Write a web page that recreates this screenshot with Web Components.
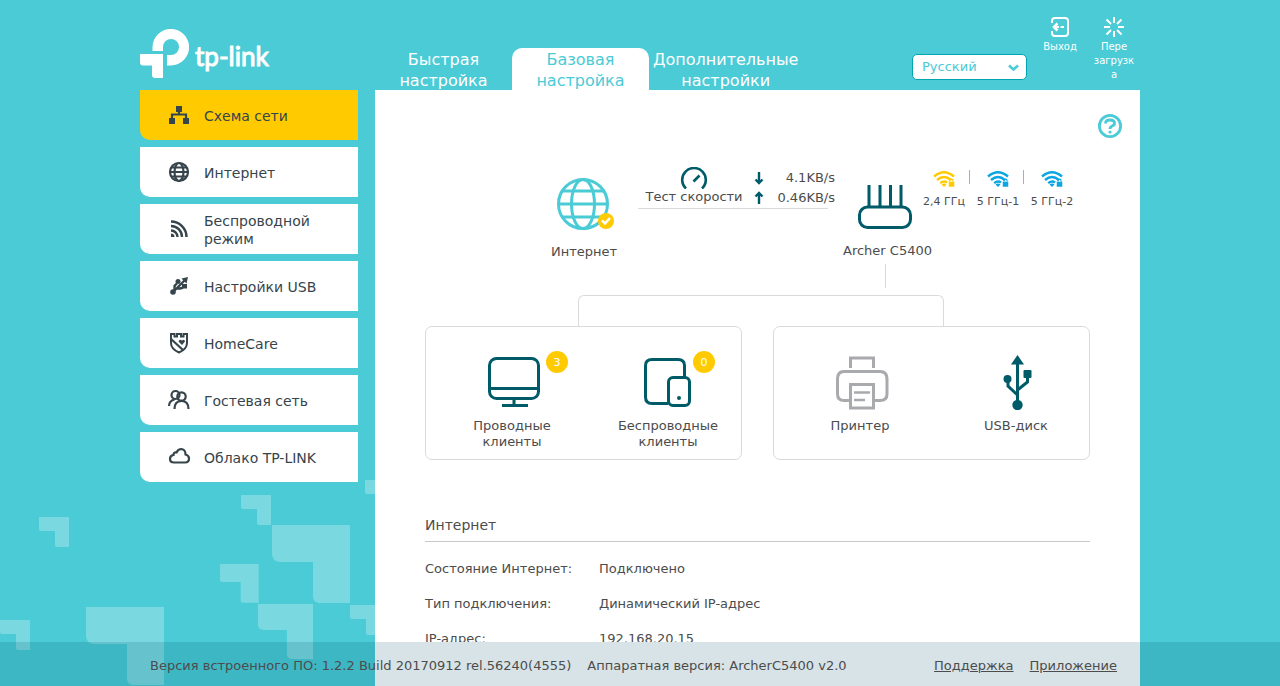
<!DOCTYPE html>
<html lang="ru">
<head>
<meta charset="utf-8">
<title>Archer C5400</title>
<style>
  body {
    margin: 0;
    font-family: "DejaVu Sans", Verdana, sans-serif;
    font-size: 13px;
    line-height: 16px;
    color: #4c4c4c;
    --brand: #4acbd6;
    --deep: #005b69;
    --accent: #ffcb00;
    --ink: #36444b;
    --line: #d9dadb;
  }
</style>
</head>
<body>
<router-app></router-app>

<template id="router-app">
  <style>
    :host { display: flex; flex-direction: column; height: 100vh; position: relative; overflow: hidden; background: var(--brand); }
    .decor { position: absolute; left: 0; bottom: 0; fill: #7ad9e0; }
    .frame { width: 100%; max-width: 1000px; margin: 0 auto; position: relative; }
    .main { flex: 1; min-height: 0; display: flex; gap: 17px; }
    side-nav { flex: 0 0 218px; }
    .panel { flex: 1; min-width: 0; display: flex; flex-direction: column; background: #fff; }
    .scroll { flex: 1; min-height: 0; overflow: hidden; margin-bottom: 44px; padding: 24px 18px 0; }
    .help { display: flex; justify-content: flex-end; }
    .help button { border: 0; padding: 0; background: none; width: 24px; height: 24px; }
    .help svg { display: block; }
    .content { padding: 0 32px; }
    page-footer { position: absolute; left: 0; right: 0; bottom: 0; }
  </style>
  <svg class="decor" width="380" height="206" viewBox="0 480 380 206" aria-hidden="true">
    <defs>
      <path id="step" d="M0 0H78V78H47Q41 77 41 71V37H8Q0 36 0 29Z"/>
      <path id="bit" d="M0 0H30V30H18Q16 30 16 28V14H2Q0 14 0 12Z"/>
    </defs>
    <use href="#bit" x="39" y="517"/>
    <use href="#bit" x="241" y="495"/>
    <use href="#bit" x="365" y="480"/>
    <use href="#bit" x="350" y="605"/>
    <use href="#bit" x="0" y="620"/>
    <use href="#step" x="272" y="525"/>
    <use href="#step" x="86" y="607"/>
    <use href="#step" transform="translate(258 604) scale(.705)"/>
    <use href="#bit" transform="translate(220 564) scale(1.29)"/>
  </svg>
  <page-header class="frame"></page-header>
  <div class="frame main">
    <side-nav>
      <nav-item icon="map" active>Схема сети</nav-item>
      <nav-item icon="globe">Интернет</nav-item>
      <nav-item icon="wifi">Беспроводной режим</nav-item>
      <nav-item icon="usb">Настройки USB</nav-item>
      <nav-item icon="shield">HomeCare</nav-item>
      <nav-item icon="guests">Гостевая сеть</nav-item>
      <nav-item icon="cloud">Облако TP-LINK</nav-item>
    </side-nav>
    <main class="panel">
      <div class="scroll">
        <div class="help"><button type="button" aria-label="Справка">
          <svg width="24" height="24" viewBox="0 0 24 24" fill="none" stroke="#4acbd6" stroke-width="2.800"><circle cx="12" cy="12" r="10.600"/><path d="M7.500 9.600Q7.500 6 12 6Q16.500 6 16.500 9.200Q16.500 11 14.200 12Q12 13 12 15"/><path d="M12 16.800v2.600"/></svg>
        </button></div>
        <div class="content">
          <network-map></network-map>
          <status-list heading="Интернет"></status-list>
        </div>
      </div>
    </main>
  </div>
  <page-footer></page-footer>
</template>

<template id="page-header">
  <style>
    :host { display: flex; height: 90px; color: #fff; }
    .logo { width: 235px; display: flex; align-items: flex-start; gap: 6px; padding-top: 29px; box-sizing: border-box; color: #fff; text-decoration: none; font: 26px/54px Lato, sans-serif; -webkit-text-stroke: 1px #fff; }
    nav { display: flex; align-items: flex-end; }
    nav a { box-sizing: border-box; min-width: 137px; height: 42px; padding: 1px 4px 0; border-radius: 10px 10px 0 0; font-size: 16px; line-height: 21px; text-align: center; color: #fff; text-decoration: none; }
    nav a.on { background: #fff; color: var(--brand); }
    .tools { margin-left: auto; display: flex; align-items: flex-start; gap: 10px; padding-right: 4px; }
    .lang { position: relative; margin-top: 54px; padding-right: 1px; }
    select { appearance: none; display: block; width: 115px; height: 26px; box-sizing: border-box; padding: 0 9px; border: 1px solid #00a4b0; border-radius: 5px; background: #fff; color: var(--brand); font: 13px/24px "DejaVu Sans", sans-serif; }
    .lang svg { position: absolute; right: 9px; top: 10px; pointer-events: none; }
    button { width: 44px; margin-top: 16px; padding: 0; border: 0; background: none; color: #fff; font: 10px/14px "DejaVu Sans", sans-serif; display: flex; flex-direction: column; align-items: center; gap: 2px; text-align: center; }
  </style>
  <a class="logo" href="#">
    <svg width="49" height="49" viewBox="0 0 49 49" fill="#fff"><path d="M12.500 22V18A18.300 18.300 0 1 1 31 36.500H27V26H31A8 8 0 1 0 23 18V22Z"/><path d="M0 25H23V49H15Q12 49 12 46V36.500H3Q0 36.500 0 33.500Z"/></svg>
    <span>tp-link</span>
  </a>
  <nav>
    <a href="#">Быстрая<br>настройка</a>
    <a href="#" class="on">Базовая<br>настройка</a>
    <a href="#">Дополнительные<br>настройки</a>
  </nav>
  <div class="tools">
    <div class="lang">
      <select aria-label="Язык"><option>Русский</option></select>
      <svg width="11" height="8" viewBox="0 0 11 8" fill="none" stroke="#4acbd6" stroke-width="2.600"><path d="M1 1.500L5.500 5.500L10 1.500"/></svg>
    </div>
    <button type="button">
      <svg width="22" height="22" viewBox="0 0 22 22" fill="none" stroke="#fff" stroke-width="2"><path d="M3 7V5Q3 2 6 2H16Q19 2 19 5V17Q19 20 16 20H6Q3 20 3 17V15"/><path d="M4 11H10M11.500 11H15" stroke-width="2"/><path d="M8.500 7.500L5 11L8.500 14.500" stroke-width="2.600"/></svg>
      <span>Выход</span>
    </button>
    <button type="button">
      <svg width="22" height="22" viewBox="0 0 22 22" stroke="#fff" stroke-width="2"><path d="M11 1V7M11 15V21M1 11H7M15 11H21M3.500 3.500L8 8M14 14L18.500 18.500M18.500 3.500L14 8M8 14L3.500 18.500"/></svg>
      <span>Пере<br>загрузк<br>а</span>
    </button>
  </div>
</template>

<template id="side-nav">
  <style>
    :host { display: block; }
    nav { display: flex; flex-direction: column; gap: 7px; }
  </style>
  <nav><slot></slot></nav>
</template>

<template id="nav-item">
  <style>
    :host { display: block; }
    a { display: flex; align-items: center; gap: 13px; height: 50px; padding: 1px 26px 0; box-sizing: border-box; background: #fff; border-radius: 0 0 0 10px; color: var(--ink); text-decoration: none; font-size: 14px; line-height: 18px; }
    :host([active]) a { background: var(--accent); }
    svg { flex: none; padding-bottom: 2px; fill: none; stroke: #36444b; stroke-width: 2.200; }
    .f { fill: #36444b; stroke: none; }
  </style>
  <a href="#"><svg width="25" height="24" viewBox="0 0 25 24"></svg><span><slot></slot></span></a>
</template>

<template id="network-map">
  <style>
    :host { display: block; padding-top: 26px; }
    .top { display: flex; align-items: flex-start; padding-left: 115px; height: 100px; }
    .node { display: flex; flex-direction: column; align-items: center; gap: 13px; white-space: nowrap; }
    .node svg { display: block; }
    .net { width: 88px; padding-top: 13px; }
    .router { width: 60px; padding-top: 20px; margin-left: 27px; padding-right: 1px; }
    .router span { margin: 0 -20px 0 -15px; }
    .speed { display: flex; width: 190px; height: 43px; margin-left: 10px; border-bottom: 1px solid var(--line); white-space: nowrap; }
    .speed button { flex: none; width: 112px; padding: 1px 0 0; border: 0; background: none; font: inherit; color: inherit; display: flex; flex-direction: column; align-items: center; justify-content: flex-start; }
    .speed { padding-top: 1px; }
    .speed button svg { margin-top: 1px; }
    .rates { display: grid; grid-template-columns: 18px 67px; line-height: 20px; padding-top: 3px; height: 40px; text-align: right; align-items: center; }
    .bands { display: flex; padding: 5px 0 0 1px; }
    .band { width: 54px; display: flex; flex-direction: column; align-items: center; gap: 8px; font: 11px/14px "DejaVu Sans", sans-serif; white-space: nowrap; position: relative; }
    .band + .band::before { content: ""; position: absolute; left: -2px; top: 1px; height: 14px; border-left: 1px solid #b0b0a0; }
    .stem { height: 24px; margin: 0 204px 7px 0; border-right: 1px solid var(--line); }
    .fork { height: 30px; margin: 0 146px 0 153px; border: 1px solid var(--line); border-bottom: 0; border-radius: 6px 6px 0 0; }
    .groups { display: grid; grid-template-columns: 1fr 1fr; gap: 31px; }
    .group { height: 134px; box-sizing: border-box; border: 1px solid var(--line); border-radius: 7px; display: flex; gap: 16px; padding: 27px 0 0 16px; }
  </style>
  <div class="top">
    <div class="node net">
      <svg width="60" height="54" viewBox="0 0 60 54" fill="none" stroke="#4acbd6" stroke-width="3"><circle cx="29" cy="27" r="24.500"/><ellipse cx="29" cy="27" rx="11.500" ry="24.500"/><path d="M4 27H54M9 14H49M9 40H49"/><circle cx="52" cy="44" r="8" fill="#ffcb00" stroke="none"/><path d="M48 43.500L51 46.500L56 41" stroke="#fff" stroke-width="2.500"/></svg>
      <span>Интернет</span>
    </div>
    <div class="speed">
      <button type="button">
        <svg width="28" height="22" viewBox="0 0 28 22" fill="none" stroke="#005b69" stroke-width="2.600"><path d="M6 21.500A11.800 11.800 0 1 1 22 21.500"/><path d="M13.500 14.500L19.500 8.500"/></svg>
        <span>Тест скорости</span>
      </button>
      <div class="rates">
        <svg width="18" height="14" viewBox="0 0 18 14" fill="none" stroke="#005b69" stroke-width="2.400"><path d="M9 1V12M5.500 8.500L9 12L12.500 8.500"/></svg><span>4.1KB/s</span>
        <svg width="18" height="14" viewBox="0 0 18 14" fill="none" stroke="#005b69" stroke-width="2.400"><path d="M9 13V2M5.500 5.500L9 2L12.500 5.500"/></svg><span>0.46KB/s</span>
      </div>
    </div>
    <div class="node router">
      <svg width="54" height="46" viewBox="0 0 54 46" fill="none" stroke="#005b69" stroke-width="3"><rect x="1.500" y="23" width="51" height="20.500" rx="8"/><path d="M11 1V23M22 1V23M32.500 1V23M43 1V23"/></svg>
      <span>Archer C5400</span>
    </div>
    <div class="bands">
      <band-icon class="band" color="#ffcb00">2,4 ГГц</band-icon>
      <band-icon class="band" color="#0aa5e2">5 ГГц-1</band-icon>
      <band-icon class="band" color="#0aa5e2">5 ГГц-2</band-icon>
    </div>
  </div>
  <div class="stem"></div>
  <div class="fork"></div>
  <div class="groups">
    <div class="group">
      <client-tile icon="monitor" count="3">Проводные клиенты</client-tile>
      <client-tile icon="tablet" count="0">Беспроводные клиенты</client-tile>
    </div>
    <div class="group">
      <client-tile icon="printer">Принтер</client-tile>
      <client-tile icon="usb">USB-диск</client-tile>
    </div>
  </div>
</template>

<template id="band-icon">
  <style>
    :host { display: flex; }
    svg { display: block; }
  </style>
  <svg width="22" height="18" viewBox="0 0 22 18" fill="none" stroke="currentColor" stroke-width="2.400"><path d="M1 7.500Q11 -1 21 7.500M4 11Q11 5 18 11M7.200 14.200Q11 11 14 13.500"/><path d="M8.500 15.500Q11 13.500 13.500 15.500L11 18Z" fill="currentColor" stroke="none"/><path d="M15.500 12.500H21.500V18H15.500Z" fill="currentColor" stroke="#fff" stroke-width=".5"/><path d="M17 12.500V11.500Q17 10.200 18.500 10.200T20 11.500V12.500" stroke-width="1.200"/></svg>
  <span><slot></slot></span>
</template>

<template id="client-tile">
  <style>
    :host { display: block; width: 140px; flex: none; position: relative; text-align: center; }
    svg { display: block; margin: 0 auto 8px; fill: none; stroke: #005b69; stroke-width: 3; }
    .label { display: block; width: 110px; margin: 0 auto; }
    .count { position: absolute; top: -3px; width: 22px; height: 22px; border-radius: 50%; background: var(--accent); color: #fff; font: 11px/23px "DejaVu Sans", sans-serif; }
    :host([icon="monitor"]) .count { left: 104px; }
    :host([icon="tablet"]) .count { left: 95px; }
  </style>
  <svg width="60" height="56" viewBox="0 0 60 56"></svg>
  <span class="label"><slot></slot></span>
</template>

<template id="status-list">
  <style>
    :host { display: block; padding-top: 56px; }
    h2 { margin: 0; padding-bottom: 7px; border-bottom: 1px solid #c8c8c8; font-size: 14px; line-height: 18px; font-weight: normal; }
    dl { margin: 9px 0 0; display: grid; grid-template-columns: 174px 1fr; line-height: 35px; }
    dd { margin: 0; }
  </style>
  <h2></h2>
  <dl>
    <dt>Состояние Интернет:</dt><dd>Подключено</dd>
    <dt>Тип подключения:</dt><dd>Динамический IP-адрес</dd>
    <dt>IP-адрес:</dt><dd>192.168.20.15</dd>
  </dl>
</template>

<template id="page-footer">
  <style>
    :host { display: block; background: rgba(3, 74, 100, .155); }
    .in { max-width: 1000px; height: 44px; margin: 0 auto; padding: 3px 23px 0 10px; box-sizing: border-box; display: flex; align-items: center; gap: 16px; }
    .links { margin-left: auto; display: flex; gap: 16px; }
    a { color: inherit; }
  </style>
  <footer class="in">
    <span>Версия встроенного ПО: 1.2.2 Build 20170912 rel.56240(4555)</span>
    <span>Аппаратная версия: ArcherC5400 v2.0</span>
    <span class="links"><a href="#">Поддержка</a><a href="#">Приложение</a></span>
  </footer>
</template>

<script>
  const NAV_ICONS = {
    map: '<path class="f" d="M10 3h6v6h-6zM3 15h6v6h-6zM17 15h6v6h-6z"/><path d="M13 9v3M6 15v-3.500h14V15"/>',
    globe: '<circle cx="13" cy="12" r="9"/><ellipse cx="13" cy="12" rx="4.500" ry="9"/><path d="M4 12h18M5.500 7.500h15M5.500 16.500h15"/>',
    wifi: '<path d="M5 4.500A15.500 15.500 0 0 1 20.500 20M5 9A11 11 0 0 1 16 20M5 13.500A6.500 6.500 0 0 1 11.500 20" stroke-width="2.400"/><path class="f" d="M5 16.500A3.500 3.500 0 0 1 8.500 20H5z"/>',
    usb: '<path d="M7 18L19 6M8.500 16.500V13Q8.500 11 11 9.500M11 14.500H14Q17 14 18 12" stroke-width="2.400"/><circle class="f" cx="7" cy="18" r="2.800"/><circle class="f" cx="12" cy="7.500" r="2.500"/><path class="f" d="M15.500 4.500L22 3L20.500 9.500zM16 10h5v4.500h-5z"/>',
    shield: '<path d="M5 3V12Q5 18 13 21.500Q21 18 21 12V3H17.500V5.500H15V3H11V5.500H8.500V3Z" stroke-width="2"/><path d="M5 8L17 19"/><path class="f" d="M16 14L12.500 10.500Q13.500 7.500 16 9.500Q18.500 7.500 19 10.500Z"/>',
    guests: '<circle cx="9.500" cy="7" r="4"/><circle cx="15.500" cy="8.500" r="4.200"/><path d="M3 18Q3 13 8.500 11.500M8.500 21Q8.500 13 15.500 13T22.500 21"/>',
    cloud: '<path d="M8 17.500Q4 17.500 4 14Q4 10.500 7.500 10Q7.500 7 10.500 7.500Q12 4 15.500 4Q19.500 4.500 19.500 9.500Q23 10.500 23 13.500Q23 17.500 19 17.500Z" stroke-width="2.200"/>'
  };

  const TILE_ICONS = {
    monitor: '<rect x="7.500" y="4.500" width="49" height="40" rx="7"/><path d="M7 34.500H57M32 45V51M20 51.500H46"/>',
    tablet: '<path d="M30 49.500H14Q7.500 49.500 7.500 43V11.500Q7.500 5.500 14 5.500H40Q46.500 5.500 46.500 11.500V23"/><rect x="30.500" y="23.500" width="21" height="28" rx="4.500"/><circle cx="41" cy="44" r="2" fill="#005b69" stroke="none"/>',
    printer: '<g stroke="#a9aaad"><path d="M20.500 14V4H43.500V14M19 46.500H14Q7.500 46.500 7.500 40V25Q7.500 17.500 14 17.500H50Q57 17.500 57 25V40Q57 46.500 50 46.500H45"/><path d="M20.500 30.500H43.500V54H20.500Z"/><path d="M24 38.500H40M24 46H35" stroke-width="2.500"/></g>',
    usb: '<path d="M31.500 8V50M31.500 41L22 32V25M31.500 36L41.500 28V20"/><g fill="#005b69" stroke="none"><path d="M31.500 1L38 10.500H25Z"/><circle cx="31.500" cy="51" r="5.200"/><circle cx="21.500" cy="25" r="4"/><rect x="37.500" y="16" width="8" height="8" rx="1"/></g>'
  };

  class TemplateElement extends HTMLElement {
    constructor() {
      super();
      const template = document.getElementById(this.localName);
      this.attachShadow({ mode: 'open' }).append(template.content.cloneNode(true));
    }
    $(selector) { return this.shadowRoot.querySelector(selector); }
  }

  customElements.define('page-header', class extends TemplateElement {});
  customElements.define('side-nav', class extends TemplateElement {});
  customElements.define('page-footer', class extends TemplateElement {});

  customElements.define('nav-item', class extends TemplateElement {
    connectedCallback() {
      this.$('svg').innerHTML = NAV_ICONS[this.getAttribute('icon')];
      if (this.hasAttribute('active')) this.$('a').setAttribute('aria-current', 'page');
    }
  });

  customElements.define('band-icon', class extends TemplateElement {
    connectedCallback() { this.$('svg').style.color = this.getAttribute('color'); }
  });

  customElements.define('client-tile', class extends TemplateElement {
    connectedCallback() {
      this.$('svg').innerHTML = TILE_ICONS[this.getAttribute('icon')];
      if (this.hasAttribute('count')) {
        const badge = document.createElement('span');
        badge.className = 'count';
        badge.textContent = this.getAttribute('count');
        this.shadowRoot.append(badge);
      }
    }
  });

  customElements.define('status-list', class extends TemplateElement {
    connectedCallback() { this.$('h2').textContent = this.getAttribute('heading'); }
  });

  customElements.define('network-map', class extends TemplateElement {});
  customElements.define('router-app', class extends TemplateElement {});
</script>
</body>
</html>
